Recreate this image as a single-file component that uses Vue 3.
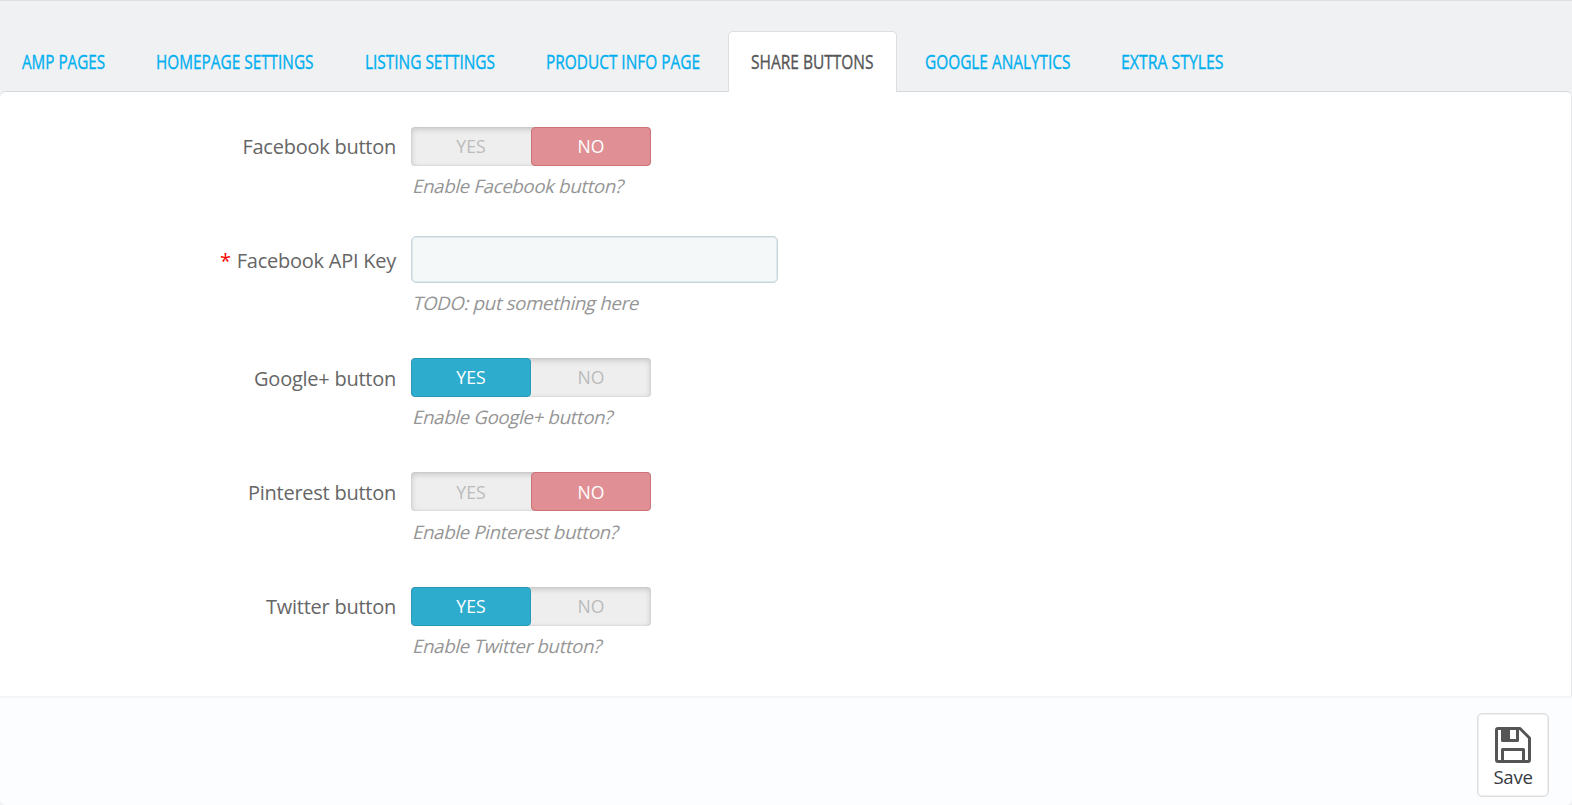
<script setup>
import { ref } from 'vue'

const tabs = [
  { label: 'AMP PAGES', width: 83 },
  { label: 'HOMEPAGE SETTINGS', width: 157.5 },
  { label: 'LISTING SETTINGS', width: 130 },
  { label: 'PRODUCT INFO PAGE', width: 154 },
  { label: 'SHARE BUTTONS', width: 122.5 },
  { label: 'GOOGLE ANALYTICS', width: 145.5 },
  { label: 'EXTRA STYLES', width: 102.5 }
]
const active = ref(4)

const fields = ref([
  { name: 'facebook', label: 'Facebook button', help: 'Enable Facebook button?', on: false },
  { name: 'key', label: 'Facebook API Key', help: 'TODO: put something here', text: true, value: '' },
  { name: 'google', label: 'Google+ button', help: 'Enable Google+ button?', on: true },
  { name: 'pinterest', label: 'Pinterest button', help: 'Enable Pinterest button?', on: false },
  { name: 'twitter', label: 'Twitter button', help: 'Enable Twitter button?', on: true }
])
</script>

<template>
  <div class="page">
    <nav class="tabs">
      <a
        v-for="(tab, i) in tabs"
        :key="tab.label"
        class="tab"
        :class="{ active: i === active }"
        @click="active = i"
      >
        <svg class="tab-label" :width="tab.width" height="28">
          <text x="0" y="21" :textLength="tab.width" lengthAdjust="spacingAndGlyphs">{{ tab.label }}</text>
        </svg>
      </a>
    </nav>
    <main class="panel">
      <form class="fields" @submit.prevent>
        <div v-for="f in fields" :key="f.name" class="row" :class="f.name">
          <label class="label"><span v-if="f.text" class="required">*</span>{{ f.label }}</label>
          <div class="control">
            <input v-if="f.text" v-model="f.value" class="input" type="text" />
            <div v-else class="switch">
              <span class="option" :class="{ yes: f.on }" @click="f.on = true">YES</span>
              <span class="option" :class="{ no: !f.on }" @click="f.on = false">NO</span>
            </div>
            <p class="help">{{ f.help }}</p>
          </div>
        </div>
      </form>
      <footer class="footer">
        <button class="save" type="button">
          <svg class="disk" width="36" height="36" viewBox="0 0 36 36">
            <path d="M1.5 3Q1.5 1.5 3 1.5H25L34.5 11V33Q34.5 34.5 33 34.5H3Q1.5 34.5 1.5 33Z" fill="none" stroke="#555" stroke-width="3" stroke-linejoin="round" />
            <path d="M7.5 1.5V13.5H22.5V1.5" fill="none" stroke="#555" stroke-width="3" stroke-linejoin="round" />
            <path d="M6 1H15V14H6Z" fill="#555" />
            <path d="M7.5 34V22.5H28.5V34" fill="none" stroke="#555" stroke-width="3" stroke-linejoin="round" />
          </svg>
          <span>Save</span>
        </button>
      </footer>
    </main>
  </div>
</template>

<style>
body {
  margin: 0;
  background: #eff1f2;
}
</style>

<style scoped>
.page {
  box-sizing: border-box;
  height: 805px;
  display: flex;
  flex-direction: column;
  border-top: 1px solid #dcdee0;
  background: #eff1f2;
  color: #666;
  font-family: "Open Sans", "Noto Sans", sans-serif;
}
.tabs {
  display: flex;
  gap: 5px;
  height: 60px;
  padding-top: 30px;
}
.tab {
  box-sizing: border-box;
  height: 60px;
  padding: 16px 22.05px 0;
  border: 1px solid transparent;
  border-bottom: 0;
  border-radius: 5px 5px 0 0;
  cursor: pointer;
}
.tab:first-child {
  padding-left: 22.3px;
  border-left: 0;
}
.tab.active {
  height: 61px;
  margin: 0 0 -1px;
  background: #fff;
  border-color: #dcdee0;
  position: relative;
  z-index: 1;
}
.tab-label {
  display: block;
  overflow: visible;
}
.tab-label text {
  fill: #00aff0;
  stroke: #00aff0;
  stroke-width: .35px;
  font-size: 19.6px;
}
.active .tab-label text {
  fill: #555;
  stroke: #555;
}
.panel {
  flex: 1;
  box-sizing: border-box;
  display: flex;
  flex-direction: column;
  background: #fff;
  border: solid #d3d8db;
  border-width: 1px 0 0;
  border-radius: 6px;
  overflow: hidden;
}
.fields {
  flex: 1;
  padding-top: 35px;
  border-right: 1px solid #e6e9eb;
}
.row {
  display: flex;
  height: 114px;
}
.row.facebook {
  height: 109px;
}
.row.key {
  height: 122px;
}
.row.pinterest {
  height: 115px;
}
.row.twitter {
  height: 100px;
}
.label {
  width: 396px;
  margin-right: 15px;
  padding-top: 6px;
  text-align: right;
  font-size: 20px;
  letter-spacing: -.25px;
  line-height: 27px;
}
.google .label,
.pinterest .label {
  padding-top: 7px;
}
.key .label {
  padding-top: 11px;
}
.required {
  margin-right: 6px;
  color: #f00;
}
.switch {
  display: flex;
  width: 240px;
  height: 39px;
  border-radius: 4px;
  background: #eee;
  box-shadow: inset 0 2px 6px rgba(0, 0, 0, .18), inset 0 0 0 1px rgba(0, 0, 0, .03);
}
.option {
  box-sizing: border-box;
  width: 120px;
  height: 39px;
  border: 1px solid transparent;
  border-radius: 4px;
  color: #bbb;
  font-size: 17.6px;
  line-height: 37px;
  text-align: center;
  cursor: pointer;
}
.pinterest .option {
  line-height: 39px;
}
.option.yes {
  background: #2eacce;
  border-color: #2899b7;
  color: #fff;
}
.option.no {
  background: #e08f95;
  border-color: #cd7277;
  color: #fff;
}
.input {
  display: block;
  box-sizing: border-box;
  width: 367px;
  height: 47px;
  padding: 8px 11px;
  border: 1px solid #c7d6db;
  border-radius: 5px;
  background: #f5f8f9;
  box-shadow: inset 0 0 0 1px #dfe9ec;
  color: #555;
  font: 18px "Open Sans", sans-serif;
}
.help {
  width: max-content;
  margin: 7px 0 0 .5px;
  color: #959595;
  font-size: 18.6px;
  letter-spacing: -.31px;
  line-height: 26px;
  white-space: nowrap;
  transform: skewX(-14deg);
  transform-origin: 0 20px;
}
.pinterest .help {
  margin-top: 8px;
}
.footer {
  box-sizing: border-box;
  display: flex;
  flex: none;
  justify-content: flex-end;
  height: 109px;
  padding: 15px 23px 0 0;
  border-top: 2px solid #f2f5f7;
  background: #fcfdfe;
}
.save {
  box-sizing: border-box;
  display: flex;
  flex-direction: column;
  align-items: center;
  width: 72px;
  height: 84px;
  padding: 13px 0 0;
  border: 1px solid #dedede;
  border-radius: 5px;
  background: #fff;
  box-shadow: inset 0 0 0 1px #eee;
  color: #363a41;
  font: 18.6px/28px "Open Sans", sans-serif;
  letter-spacing: -.3px;
}
.disk {
  display: block;
  flex: none;
}
</style>
